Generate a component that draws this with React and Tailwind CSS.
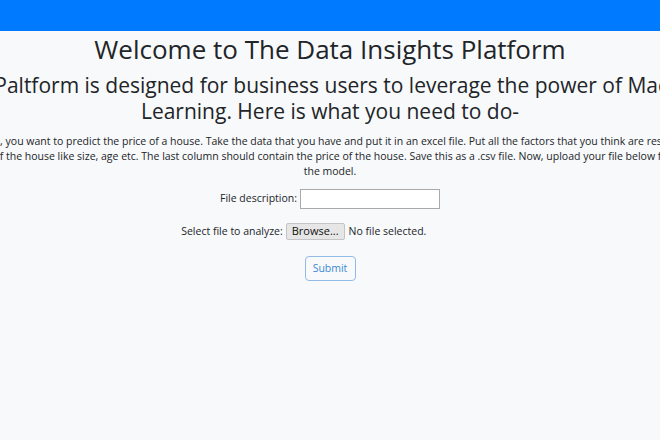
import React from "react";

const font = { fontFamily: '"Open Sans", "Noto Sans", sans-serif' };

const Header = () => <div className="h-[31px] w-full bg-[#007bff]"></div>;

const Intro = () => {
    return (
        <div className="flex w-full justify-center overflow-hidden">
            <div className="w-[900px] shrink-0 text-center text-[#212529]">
                <h1 className="text-[26px] leading-[34px] mt-[1px]">Welcome to The Data Insights Platform</h1>
                <h3 className="text-[21px] leading-[26px] mt-[6px] whitespace-nowrap">
                    This Paltform is designed for business users to leverage the power of Machine
                    <br />
                    Learning. Here is what you need to do-
                </h3>
                <p className="text-[10.5px] leading-[15px] mt-[10px] whitespace-nowrap">
                    For example, you want to predict the price of a house. Take the data that you have and put it in an excel file. Put all the factors that you think are responsible for
                    <br />
                    the price of the house like size, age etc. The last column should contain the price of the house. Save this as a .csv file. Now, upload your file below for training
                    <br />
                    the model.
                </p>
            </div>
        </div>
    );
};

const UploadForm = () => {
    return (
        <form className="flex flex-col items-center text-[10.5px] text-[#212529]">
            <label className="flex items-center mt-[10px]">
                File description:
                <input type="text" className="ml-[3px] w-[140px] h-[20px] bg-white border border-[#a9a9a9]" />
            </label>
            <div className="flex items-center mt-[14px]">
                <span>Select file to analyze:</span>
                {/* fake file input, fixed width like the browser one */}
                <span className="ml-[3px] w-[193px] flex items-center">
                    <span className="px-[5px] h-[17px] flex items-center bg-[#e6e6e6] border border-[#c4c4c4] rounded-[2px] text-[#111] text-[11px]">Browse...</span>
                    <span className="ml-[4px]">No file selected.</span>
                </span>
            </div>
            <button type="button" className="mt-[16px] w-[51px] h-[25px] rounded-[4px] border border-[#8fbbe6] text-[#3b89d6] bg-transparent">
                Submit
            </button>
        </form>
    );
};

export default function App() {
    return (
        <div className="min-h-[440px] w-full bg-[#f8f9fa]" style={font}>
            <Header />
            <Intro />
            <UploadForm />
        </div>
    );
}
